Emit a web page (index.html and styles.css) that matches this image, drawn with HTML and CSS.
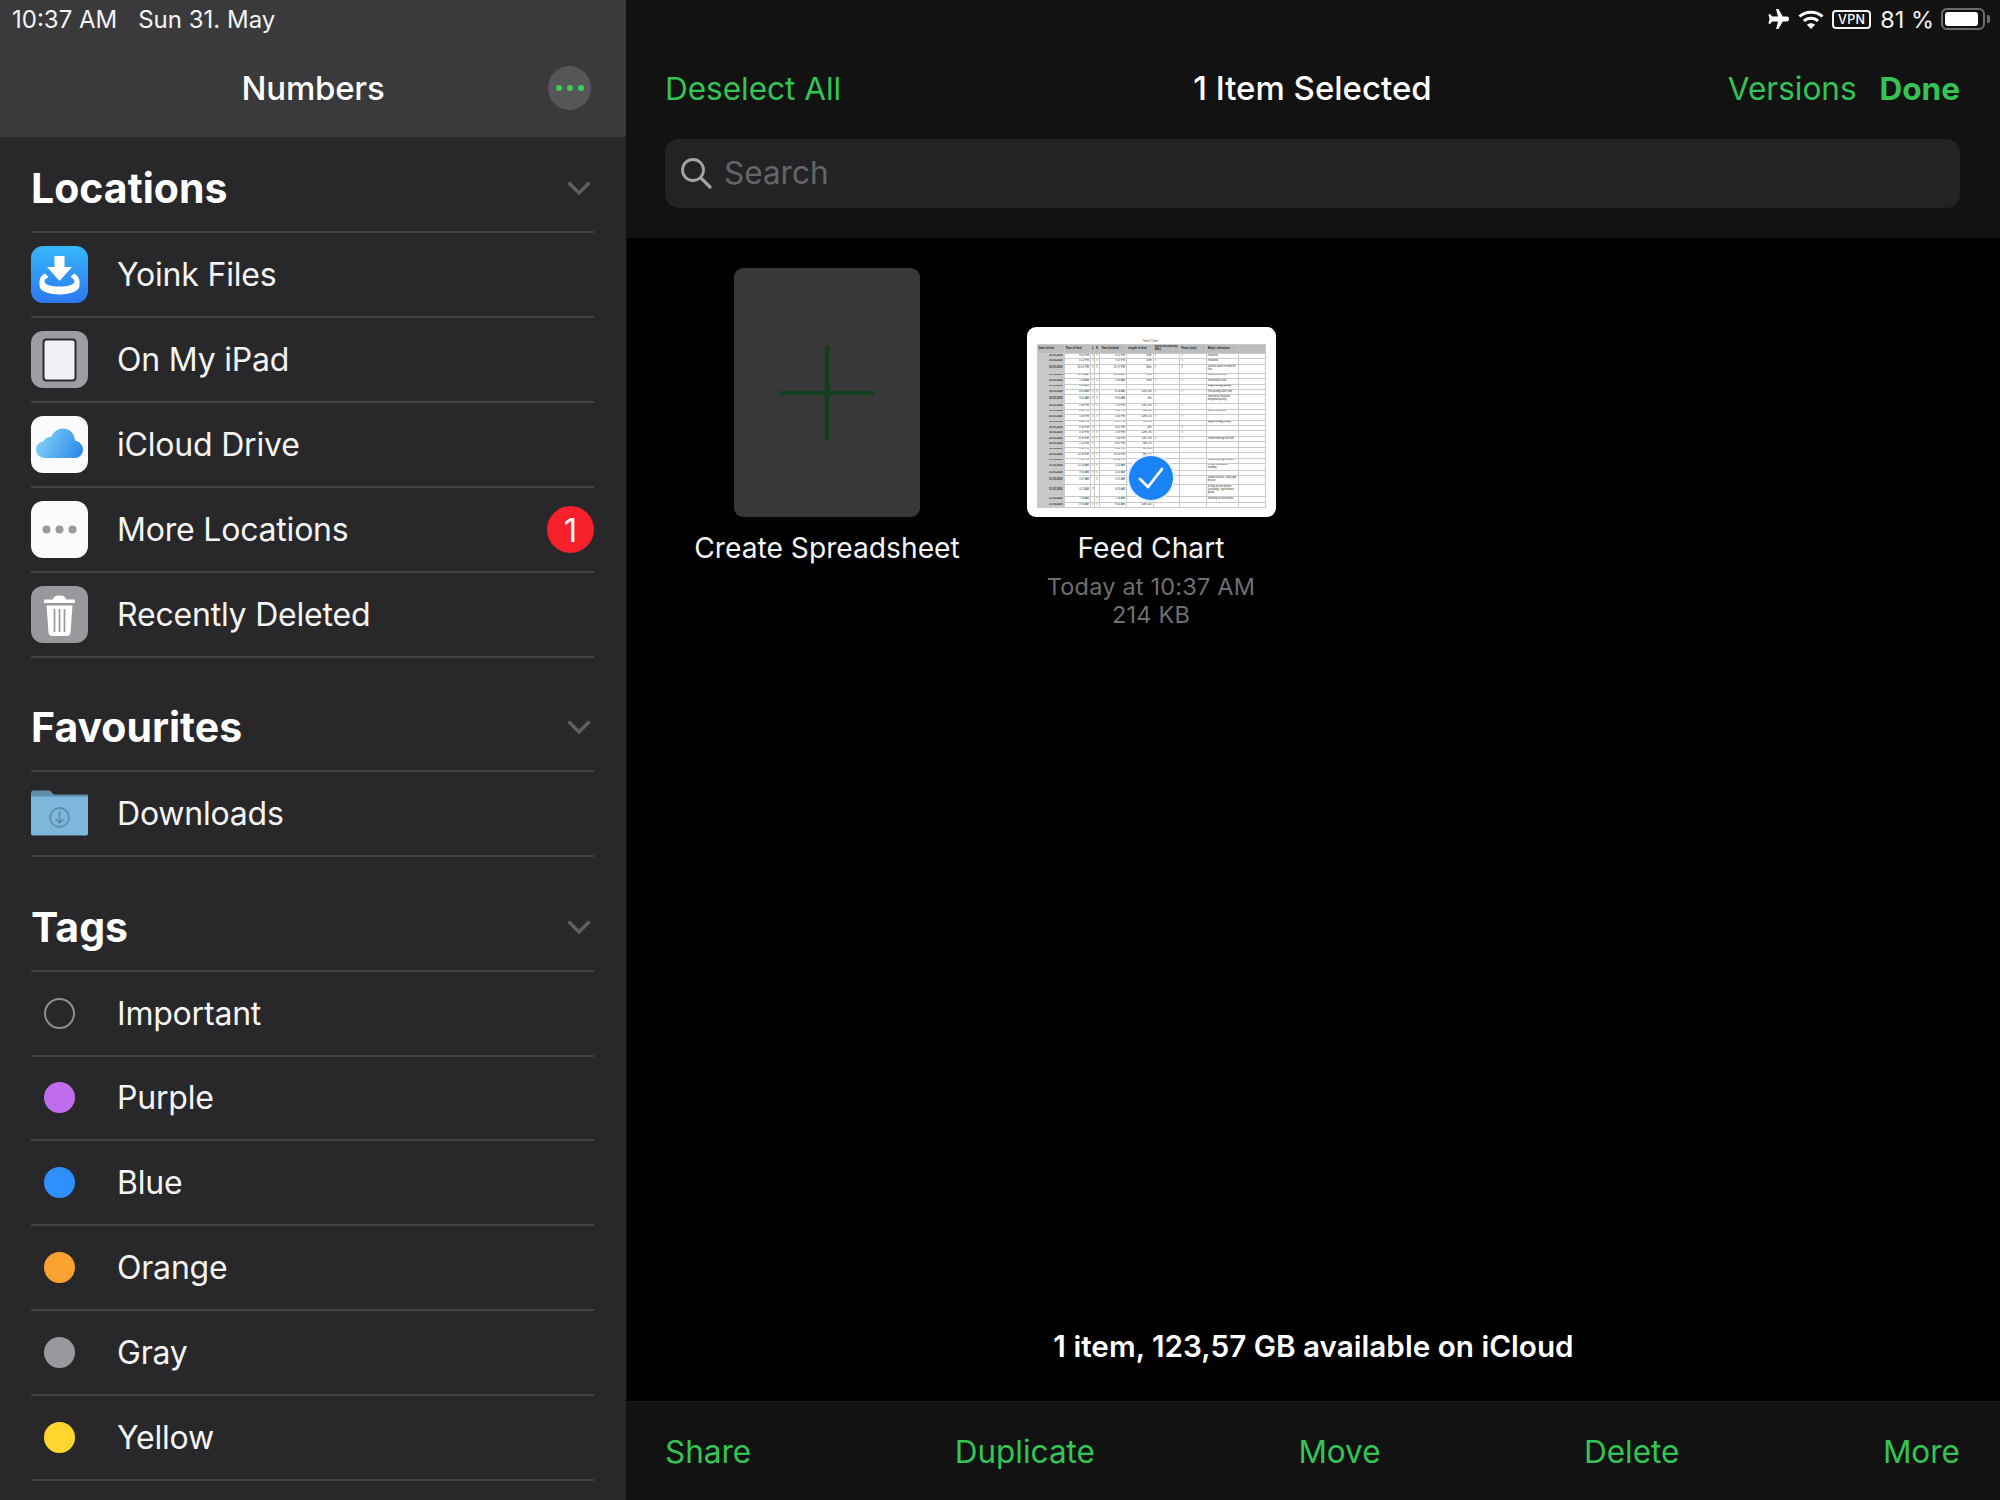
FILE: index.html
```html
<!DOCTYPE html>
<html lang="en">
<head>
<meta charset="utf-8">
<title>Numbers</title>
<link rel="stylesheet" href="styles.css">
</head>
<body>
<div class="screen">
  <aside class="sidebar">
    <header class="side-head">
      <div class="status-left"><span>10:37 AM</span><span>Sun 31. May</span></div>
      <div class="side-nav">
        <h1 class="side-title">Numbers</h1>
        <span class="dots-btn"><i></i><i></i><i></i></span>
      </div>
    </header>

    <section class="group first">
      <div class="group-head"><h2>Locations</h2><svg class="chev" viewBox="0 0 24 14"><path d="M1.5 1.5 12 12 22.5 1.5"/></svg></div>
      <div class="row">
        <svg class="tile" viewBox="0 0 57 57">
          <defs><linearGradient id="yoink" x1="0" y1="0" x2="0" y2="1"><stop offset="0" stop-color="#37b6f9"/><stop offset="1" stop-color="#2d78f0"/></linearGradient></defs>
          <rect width="57" height="57" rx="12" fill="url(#yoink)"/>
          <path d="M14 27.5C10.500 29.500 8.500 32 8.500 35.500V39.500C8.500 45 17 48.500 28.500 48.500S48.500 45 48.500 39.500V35.500C48.500 32 46.500 29.500 43 27.500L39.500 31C42 32.500 43.500 33.800 43.500 35.500C43.500 38.500 37 40.500 28.500 40.500S13.500 38.500 13.500 35.500C13.500 33.800 15 32.500 17.500 31Z" fill="#fff"/>
          <path d="M23.500 10H33.500V21H41L28.500 35 16 21H23.500Z" fill="#fff"/>
        </svg>
        <span class="label">Yoink Files</span>
      </div>
      <div class="row">
        <svg class="tile" viewBox="0 0 57 57">
          <rect width="57" height="57" rx="12" fill="#9d9da3"/>
          <rect x="12.500" y="8.500" width="32" height="41" rx="3" fill="#f0f0f6" stroke="#2a2a2c" stroke-width="2"/>
        </svg>
        <span class="label">On My iPad</span>
      </div>
      <div class="row">
        <svg class="tile" viewBox="0 0 57 57">
          <defs><linearGradient id="cloud" x1="0" y1="0.3" x2="1" y2="0.6"><stop offset="0" stop-color="#86d3f8"/><stop offset="1" stop-color="#2f8cea"/></linearGradient></defs>
          <rect width="57" height="57" rx="12" fill="#fbfbfd"/>
          <path d="M14 42C8.500 42 5 38 5 33.500 5 29 8.500 26 12.500 25.500 14 22 17 20.500 20 21.200 22.500 15.500 27 12.500 32 12.500 39 12.500 43.500 18 44 24.500 49 25.500 52 29.500 52 33.500 52 38.500 48 42 43.500 42Z" fill="url(#cloud)"/>
        </svg>
        <span class="label">iCloud Drive</span>
      </div>
      <div class="row">
        <svg class="tile" viewBox="0 0 57 57">
          <rect width="57" height="57" rx="12" fill="#fbfbfd"/>
          <circle cx="15.500" cy="28.500" r="4" fill="#98989d"/><circle cx="28.500" cy="28.500" r="4" fill="#98989d"/><circle cx="41.500" cy="28.500" r="4" fill="#98989d"/>
        </svg>
        <span class="label">More Locations</span>
        <span class="badge">1</span>
      </div>
      <div class="row">
        <svg class="tile" viewBox="0 0 57 57">
          <rect width="57" height="57" rx="12" fill="#98989d"/>
          <path d="M13 13.500H44V17H13Z M22 13.500C22 8 35 8 35 13.500Z" fill="#fff"/>
          <path d="M15.500 19.500H41.500L39.500 46.500C39.300 48.500 38 50 36 50H21C19 50 17.700 48.500 17.500 46.500Z" fill="#fff"/>
          <path d="M23.500 23V46M28.500 23V46M33.500 23V46" stroke="#98989d" stroke-width="1.700" fill="none"/>
        </svg>
        <span class="label">Recently Deleted</span>
      </div>
    </section>

    <section class="group second">
      <div class="group-head"><h2>Favourites</h2><svg class="chev" viewBox="0 0 24 14"><path d="M1.5 1.5 12 12 22.5 1.5"/></svg></div>
      <div class="row">
        <svg class="tile" viewBox="0 0 57 57">
          <path d="M0 8C0 6.500 1 5.500 2.500 5.500H18C20 5.500 21 8 23 9.500H57V20H0Z" fill="#5d8dab"/>
          <path d="M0 11.500H55C56.200 11.500 57 12.300 57 13.500V48.500C57 49.700 56.200 50.500 55 50.500H2C0.800 50.500 0 49.700 0 48.500Z" fill="#7db7dc"/>
          <circle cx="28.500" cy="32.500" r="9.500" fill="none" stroke="#5f8fae" stroke-width="1.800"/>
          <path d="M28.500 26.500V38M24.500 34 28.500 38 32.500 34" fill="none" stroke="#5f8fae" stroke-width="1.800"/>
        </svg>
        <span class="label">Downloads</span>
      </div>
    </section>

    <section class="group">
      <div class="group-head"><h2>Tags</h2><svg class="chev" viewBox="0 0 24 14"><path d="M1.5 1.5 12 12 22.5 1.5"/></svg></div>
      <div class="row"><span class="tag-slot"><i class="tag tag-none"></i></span><span class="label">Important</span></div>
      <div class="row"><span class="tag-slot"><i class="tag tag-purple"></i></span><span class="label">Purple</span></div>
      <div class="row"><span class="tag-slot"><i class="tag tag-blue"></i></span><span class="label">Blue</span></div>
      <div class="row"><span class="tag-slot"><i class="tag tag-orange"></i></span><span class="label">Orange</span></div>
      <div class="row"><span class="tag-slot"><i class="tag tag-gray"></i></span><span class="label">Gray</span></div>
      <div class="row"><span class="tag-slot"><i class="tag tag-yellow"></i></span><span class="label">Yellow</span></div>
    </section>
  </aside>

  <main class="content">
    <header class="top">
      <div class="status-right">
        <svg class="st-plane" viewBox="0 0 24 22"><path d="M10.500 0.500H13L17.500 8.500H22C23.300 8.500 24 9.600 24 11S23.300 13.500 22 13.500H17.500L13 21.500H10.500L12.500 13.500H6.500L4.500 16H2.500L3.800 11 2.500 6H4.500L6.500 8.500H12.500Z" fill="#fff"/></svg>
        <svg class="st-wifi" viewBox="0 0 26 19"><path d="M1.500 6.500C7.500 0.800 18.500 0.800 24.500 6.500" fill="none" stroke="#fff" stroke-width="3"/><path d="M6 11C10 7.300 16 7.300 20 11" fill="none" stroke="#fff" stroke-width="3"/><path d="M13 19 9 14.800C11.200 12.800 14.800 12.800 17 14.800Z" fill="#fff"/></svg>
        <span class="st-vpn">VPN</span>
        <span class="st-pct">81 %</span>
        <span class="st-batt"><i></i></span><span class="st-nub"></span>
      </div>
      <nav class="nav">
        <span class="link">Deselect All</span>
        <span class="nav-title">1 Item Selected</span>
        <span class="nav-right"><span class="link">Versions</span><span class="link strong">Done</span></span>
      </nav>
      <div class="search">
        <svg class="search-ico" viewBox="0 0 32 32"><circle cx="13" cy="13" r="10.500" fill="none" stroke="#a3a3a8" stroke-width="2.800"/><path d="M20.800 20.800 30 30" stroke="#a3a3a8" stroke-width="3.200" stroke-linecap="round"/></svg>
        <span>Search</span>
      </div>
    </header>

    <div class="files">
      <figure class="file">
        <div class="thumb-slot">
          <div class="new-doc"><svg class="plus" viewBox="0 0 94 94"><path d="M0 47H94M47 0V94" stroke="#0f3f1d" stroke-width="4.500"/></svg></div>
        </div>
        <figcaption class="file-name">Create Spreadsheet</figcaption>
      </figure>
      <figure class="file">
        <div class="thumb-slot">
          <div class="sheet">
            <div class="sheet-title">Feed Chart</div>
            <table class="chart">
              <colgroup><col class="c1"><col class="c2"><col class="c3"><col class="c4"><col class="c2"><col class="c2"><col class="c2"><col class="c2"><col class="c5"><col class="c2"></colgroup>
              <tr class="hd"><th>Date of feed</th><th>Time of feed</th><th>L</th><th>R</th><th>Time finished</th><th>Length of feed</th><th>Fed to be (mostly) (Min)</th><th>Pause (min)</th><th>Baby's behaviour</th><th></th></tr>
              <tr><td>30.05.2020</td><td>3:01 PM</td><td>Y</td><td>Y</td><td>3:15 PM</td><td>30m</td><td>Y</td><td>Y</td><td>Relaxed</td><td></td></tr>
              <tr><td>30.05.2020</td><td>5:20 PM</td><td>Y</td><td>Y</td><td>7:05 PM</td><td>30m</td><td>Y</td><td>Y</td><td>Relaxed</td><td></td></tr>
              <tr class="tall"><td>30.05.2020</td><td>10:51 PM</td><td>Y</td><td>Y</td><td>11:17 PM</td><td>30m</td><td>Y</td><td>Y</td><td>Did not want to feed on first</td><td></td></tr>
              <tr><td>30.05.2020</td><td>12:14 AM</td><td>Y</td><td>Y</td><td>12:40 AM</td><td>16m</td><td>Y</td><td>Y</td><td>Relaxed at start</td><td></td></tr>
              <tr><td>30.05.2020</td><td>1:58 AM</td><td>Y</td><td>Y</td><td>2:09 AM</td><td>30m</td><td>Y</td><td>Y</td><td>Relaxed at start</td><td></td></tr>
              <tr><td>30.05.2020</td><td>2:20 AM</td><td></td><td></td><td></td><td></td><td></td><td></td><td><b>Expressing (40ml)</b></td><td></td></tr>
              <tr><td>30.05.2020</td><td>8:05 AM</td><td>Y</td><td>Y</td><td>8:16 AM</td><td>11m 24s</td><td>Y</td><td>Y</td><td>Fell asleep after one</td><td></td></tr>
              <tr class="tall"><td>30.05.2020</td><td>9:41 AM</td><td>Y</td><td>Y</td><td>9:50 AM</td><td>9m</td><td></td><td></td><td>Started to feed but dropped quickly</td><td></td></tr>
              <tr><td>30.05.2020</td><td>1:46 PM</td><td>Y</td><td>Y</td><td>1:59 PM</td><td>11m 24s</td><td>Y</td><td>Y</td><td></td><td></td></tr>
              <tr><td>30.05.2020</td><td>3:03 PM</td><td>Y</td><td>Y</td><td>3:09 PM</td><td>16m 4s</td><td>Y</td><td>Y</td><td>Brief feed at 4h</td><td></td></tr>
              <tr><td>30.05.2020</td><td>3:46 PM</td><td>Y</td><td>Y</td><td>3:56 PM</td><td>10m 21s</td><td>Y</td><td>Y</td><td></td><td></td></tr>
              <tr><td>30.05.2020</td><td>3:43 PM</td><td>Y</td><td>Y</td><td>4:17 PM</td><td>34m 4s</td><td></td><td></td><td><b>Expressing (10ml)</b></td><td></td></tr>
              <tr><td>30.05.2020</td><td>4:30 PM</td><td>Y</td><td></td><td>4:41 PM</td><td>11m</td><td></td><td>Y</td><td></td><td></td></tr>
              <tr><td>30.05.2020</td><td>5:39 PM</td><td>Y</td><td>Y</td><td>5:59 PM</td><td>11m 19s</td><td></td><td>Y</td><td></td><td></td></tr>
              <tr><td>30.05.2020</td><td>6:39 PM</td><td>Y</td><td>Y</td><td>7:06 PM</td><td>11m 19s</td><td>Y</td><td>Y</td><td>Good feeding session</td><td></td></tr>
              <tr><td>30.05.2020</td><td>7:50 PM</td><td>Y</td><td></td><td>8:07 PM</td><td>9m 27s</td><td></td><td></td><td></td><td></td></tr>
              <tr><td>30.05.2020</td><td>8:11 PM</td><td>Y</td><td>Y</td><td>8:30 PM</td><td>9m 15s</td><td></td><td></td><td></td><td></td></tr>
              <tr><td>30.05.2020</td><td>10:30 PM</td><td>Y</td><td>Y</td><td>10:44 PM</td><td>9m 27s</td><td></td><td></td><td></td><td></td></tr>
              <tr><td>30.05.2020</td><td>9:59 PM</td><td>Y</td><td>Y</td><td>11:50 PM</td><td></td><td></td><td></td><td>Good feeding session</td><td></td></tr>
              <tr><td>31.05.2020</td><td>12:34 AM</td><td>Y</td><td>Y</td><td>1:10 AM</td><td></td><td></td><td></td><td>Great cumulative feeding</td><td></td></tr>
              <tr><td>31.05.2020</td><td>3:56 AM</td><td>Y</td><td>Y</td><td>4:20 AM</td><td></td><td></td><td></td><td></td><td></td></tr>
              <tr class="tall"><td>31.05.2020</td><td>5:07 AM</td><td></td><td>Y</td><td>5:51 AM</td><td></td><td></td><td></td><td>Good session, only right breast</td><td></td></tr>
              <tr class="taller"><td>31.05.2020</td><td>6:15 AM</td><td>Y</td><td></td><td>6:50 AM</td><td></td><td></td><td></td><td>Fussy on left breast (pausing), right breast good</td><td></td></tr>
              <tr><td>31.05.2020</td><td>7:04 AM</td><td></td><td>Y</td><td>7:18 AM</td><td></td><td></td><td></td><td>Nothing on left breast</td><td></td></tr>
              <tr><td>31.05.2020</td><td>8:16 AM</td><td>Y</td><td>Y</td><td>8:50 AM</td><td>30m 14s</td><td></td><td></td><td></td><td></td></tr>
            </table>
            <span class="check"><svg viewBox="0 0 44 44"><path d="M11 23 19 31 33 13" fill="none" stroke="#fff" stroke-width="2.800" stroke-linecap="round" stroke-linejoin="round"/></svg></span>
          </div>
        </div>
        <figcaption class="file-name">Feed Chart</figcaption>
        <p class="file-meta">Today at 10:37 AM<br>214 KB</p>
      </figure>
    </div>

    <p class="summary">1 item, 123,57 GB available on iCloud</p>

    <footer class="toolbar">
      <span class="link">Share</span>
      <span class="link">Duplicate</span>
      <span class="link">Move</span>
      <span class="link">Delete</span>
      <span class="link">More</span>
    </footer>
  </main>
</div>
</body>
</html>
```

FILE: styles.css
```css
* { box-sizing: border-box; }
html, body { margin: 0; padding: 0; background: #000; }
body { font-family: Inter, "Noto Sans", "Liberation Sans", sans-serif; color: #fff; }
h1, h2, p, figure { margin: 0; }

.screen { display: flex; width: 2000px; height: 1500px; overflow: hidden; background: #000; }

/* sidebar */
.sidebar { width: 627px; flex: none; background: #28282a; border-right: 1px solid #111; overflow: hidden; }
.side-head { height: 137px; background: #3a3a3c; padding: 0 31px 0 12px; }
.status-left { display: flex; gap: 21px; height: 38px; align-items: center; font-size: 24px; color: #f4f4f4; }
.side-nav { position: relative; display: flex; justify-content: center; align-items: center; height: 50px; margin: 25px -31px 0 -12px; }
.side-title { font-size: 33px; font-weight: 500; line-height: 50px; letter-spacing: -0.2px; }
.dots-btn { position: absolute; left: 548px; top: 3px; width: 43px; height: 44px; border-radius: 50%; background: #565659; display: flex; justify-content: center; align-items: center; gap: 5px; }
.dots-btn i { width: 6px; height: 6px; border-radius: 50%; background: #3dcb5c; }

.group { margin: 0 32px 0 31px; }
.group-head { height: 115px; display: flex; justify-content: space-between; align-items: flex-end; padding: 0 2px 19px 0; border-bottom: 2px solid #434345; }
.first .group-head { height: 96px; }
.second .group-head { height: 114px; }
.group-head h2 { font-size: 41px; font-weight: 700; line-height: 48px; }
.chev { width: 24px; height: 14px; margin: 0 1px 17px 0; }
.chev path { fill: none; stroke: #5f5f62; stroke-width: 3.4; }

.row { height: 84.8px; display: flex; align-items: center; border-bottom: 2px solid #434345; }
.first .row { height: 85px; }
.tile { width: 57px; height: 57px; flex: none; }
.label { margin-left: 29px; font-size: 32px; font-weight: 400; letter-spacing: -0.2px; color: #f5f5f5; }
.badge { margin-left: auto; width: 47px; height: 47px; border-radius: 50%; background: #f7202b; display: flex; align-items: center; justify-content: center; font-size: 33px; color: #fff; }
.tag-slot { width: 57px; flex: none; display: flex; justify-content: center; }
.tag { display: block; width: 31px; height: 31px; border-radius: 50%; }
.tag-none { border: 2px solid #8e8e90; }
.tag-purple { background: #bf6dec; }
.tag-blue { background: #2f90fd; }
.tag-orange { background: #faa22f; }
.tag-gray { background: #98989d; }
.tag-yellow { background: #ffd52e; }

/* content */
.content { flex: 1; min-width: 0; display: flex; flex-direction: column; }
.top { height: 238px; background: #121212; padding: 0 40px 0 38px; flex: none; }
.status-right { height: 38px; display: flex; align-items: center; justify-content: flex-end; margin-right: -30px; }
.st-plane { width: 23px; height: 22px; }
.st-wifi { width: 26px; height: 19px; margin-left: 9px; }
.st-vpn { margin-left: 8px; width: 39px; height: 19px; border: 2px solid #f2f2f2; border-radius: 4px; font-size: 12.5px; font-weight: 500; display: flex; align-items: center; justify-content: center; letter-spacing: 0.3px; }
.st-pct { margin-left: 9px; font-size: 23.5px; color: #f4f4f4; }
.st-batt { margin-left: 7px; width: 44px; height: 22px; border: 2px solid #6c6c6e; border-radius: 6px; padding: 2px; display: block; }
.st-batt i { display: block; width: 33px; height: 14px; background: #fff; border-radius: 3px; }
.st-nub { width: 3px; height: 8px; margin-left: 2px; background: #6c6c6e; border-radius: 0 2px 2px 0; }

.nav { position: relative; display: flex; justify-content: space-between; align-items: center; height: 50px; margin-top: 25px; }
.nav-title { position: absolute; left: 0; right: 0; text-align: center; font-size: 33px; font-weight: 500; }
.nav-right { display: flex; gap: 23px; position: relative; }
.link { font-size: 31.5px; color: #34c456; white-space: nowrap; }
.strong { font-weight: 700; }

.search { margin-top: 26px; height: 69px; background: #232325; border-radius: 14px; display: flex; align-items: center; padding: 0 0 2px 15px; font-size: 31.5px; color: #656569; }
.search-ico { width: 32px; height: 32px; margin-right: 12px; }

.files { flex: 1; display: flex; padding: 30px 0 0 38px; }
.file { width: 324px; display: flex; flex-direction: column; align-items: center; }
.thumb-slot { height: 249px; display: flex; align-items: flex-end; }
.new-doc { width: 186px; height: 249px; background: #383838; border-radius: 9px; display: flex; align-items: center; justify-content: center; }
.plus { width: 94px; height: 94px; }
.file-name { margin-top: 13px; font-size: 28.2px; line-height: 36px; color: #f5f5f5; white-space: nowrap; }
.file-meta { margin-top: 7px; font-size: 23.5px; line-height: 28px; text-align: center; color: #6f6f73; letter-spacing: 0.2px; }

.sheet { position: relative; width: 249px; height: 190px; background: #fff; border-radius: 9px; padding: 12px 11px 0 10px; overflow: hidden; }
.sheet-title { height: 5px; font-size: 3px; line-height: 5px; text-align: center; color: #555; }
.chart { width: 228px; table-layout: fixed; border-collapse: collapse; font-size: 2.7px; color: #2a2a2a; font-family: "Liberation Sans", sans-serif; }
.c1 { width: 27px; } .c2 { width: 26.6px; } .c3 { width: 4px; } .c4 { width: 5.300px; } .c5 { width: 32.700px; }
.chart th, .chart td { padding: 0 1px; height: 5.450px; line-height: 2.900px; border: 0.5px solid #c9c9c9; overflow: hidden; text-align: left; font-weight: 400; vertical-align: middle; }
.chart td:first-child { background: #c8c8c8; text-align: right; font-weight: 700; }
.chart td:nth-child(2), .chart td:nth-child(5), .chart td:nth-child(6) { text-align: right; }
.chart th { background: #bcbcbc; height: 9px; font-weight: 700; color: #222; }
.chart .tall td { height: 8.800px; }
.chart .taller td { height: 12.300px; }

.check { position: absolute; left: 102px; top: 129px; width: 44px; height: 44px; border-radius: 50%; background: #1a83f6; box-shadow: 0 0 0 2px #e8f2fb; }
.check svg { display: block; width: 44px; height: 44px; }

.summary { flex: none; text-align: center; font-size: 29.7px; font-weight: 600; line-height: 36px; padding-bottom: 37px; }
.toolbar { flex: none; height: 99px; background: #121212; border-top: 1px solid #1a1a1a; padding: 0 40px 0 38px; display: flex; justify-content: space-between; align-items: center; }
```
